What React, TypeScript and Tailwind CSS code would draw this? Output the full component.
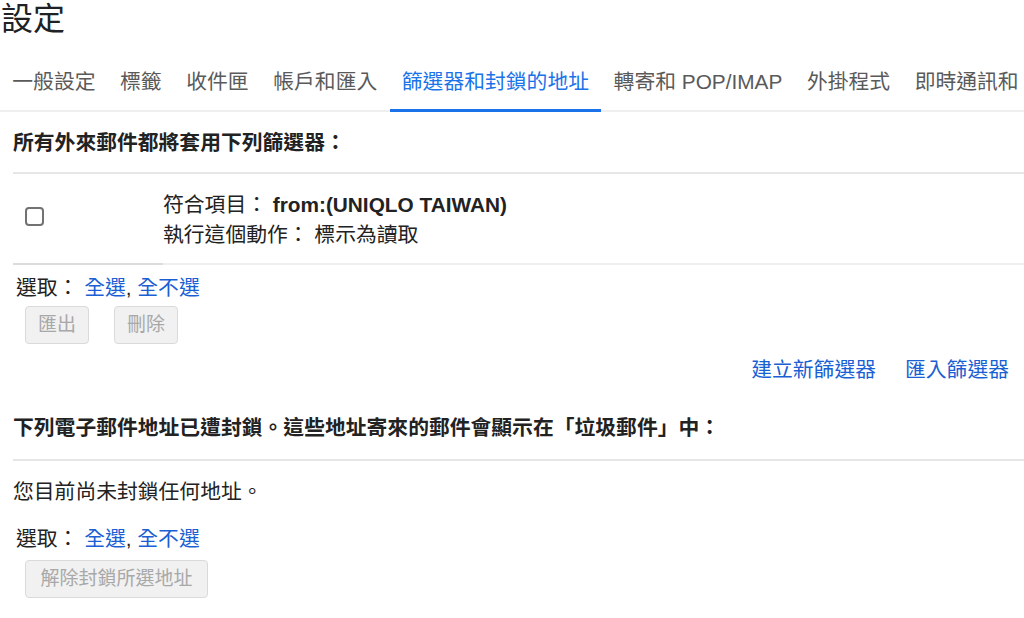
import React from 'react';

const tabs = [
  '一般設定',
  '標籤',
  '收件匣',
  '帳戶和匯入',
  '篩選器和封鎖的地址',
  '轉寄和 POP/IMAP',
  '外掛程式',
  '即時通訊和',
];

const ACTIVE = 4;

const DisabledButton = ({ label, wide }: { label: string; wide?: boolean }) => (
  <button
    disabled
    className={`h-[38px] rounded-[4px] border border-[#dadada] bg-[#f1f1f1] text-[19px] leading-[20px] text-[#a8a8a8] ${
      wide ? 'px-[14.5px]' : 'px-[12px]'
    }`}
  >
    {label}
  </button>
);

// 選取： 全選, 全不選
const SelectLine = ({ className }: { className: string }) => (
  <div className={`pl-[3px] text-[20.8px] leading-[21px] text-[#222] ${className}`}>
    選取：{' '}
    <a className="text-[#1a5fd3]">全選</a>, <a className="text-[#1a5fd3]">全不選</a>
  </div>
);

export default function App() {
  return (
    <div
      className="w-full h-[618px] overflow-hidden bg-white text-[#222]"
      style={{ fontFamily: '"Liberation Sans", "Noto Sans CJK TC", sans-serif' }}
    >
      <h1 className="pt-[3px] pl-[1px] text-[32px] leading-[32px] font-normal text-[#202124]">設定</h1>

      <div className="mt-[36px] flex whitespace-nowrap border-b-2 border-[#efefef]">
        {tabs.map((t, i) => (
          <div
            key={t}
            className={`shrink-0 px-[12.3px] pb-[17px] -mb-[2px] border-b-[3px] text-[20.8px] leading-[21px] ${
              i === ACTIVE ? 'border-[#1a73e8] text-[#1a73e8]' : 'border-transparent text-[#5a5a5a]'
            }`}
          >
            {t}
          </div>
        ))}
      </div>

      <div className="pl-[13px]">
        <h2 className="mt-[20px] text-[20.8px] leading-[21px] font-bold text-[#222]">
          所有外來郵件都將套用下列篩選器：
        </h2>

        <div className="mt-[19px] border-t-2 border-[#e6e6e6] flex">
          <div className="w-[150px] border-b-2 border-[#dcdcdc] flex items-center pl-[12px] pb-[4px]">
            <span className="block w-[19px] h-[19px] rounded-[4px] border-2 border-[#727272]" />
          </div>
          <div className="flex-1 border-b-2 border-[#efefef] pt-[16px] pb-[13px] text-[20.8px] leading-[30px]">
            <div>
              符合項目： <span className="font-bold">from:(UNIQLO TAIWAN)</span>
            </div>
            <div>執行這個動作： 標示為讀取</div>
          </div>
        </div>

        <SelectLine className="mt-[12px]" />

        <div className="mt-[8px] pl-[12px] flex gap-[25px]">
          <DisabledButton label="匯出" />
          <DisabledButton label="刪除" />
        </div>

        <div className="mt-[15px] pr-[15px] flex justify-end gap-[29px] text-[20.8px] leading-[21px] text-[#1a5fd3]">
          <a>建立新篩選器</a>
          <a>匯入篩選器</a>
        </div>

        <h2 className="mt-[37px] text-[20.8px] leading-[21px] font-bold text-[#222]">
          下列電子郵件地址已遭封鎖。這些地址寄來的郵件會顯示在「垃圾郵件」中：
        </h2>

        <div className="mt-[21px] border-t-2 border-[#e6e6e6]" />

        <p className="mt-[20px] text-[20.8px] leading-[21px]">您目前尚未封鎖任何地址。</p>

        <SelectLine className="mt-[26px]" />

        <div className="mt-[11px] pl-[12px]">
          <DisabledButton label="解除封鎖所選地址" wide />
        </div>
      </div>
    </div>
  );
}
